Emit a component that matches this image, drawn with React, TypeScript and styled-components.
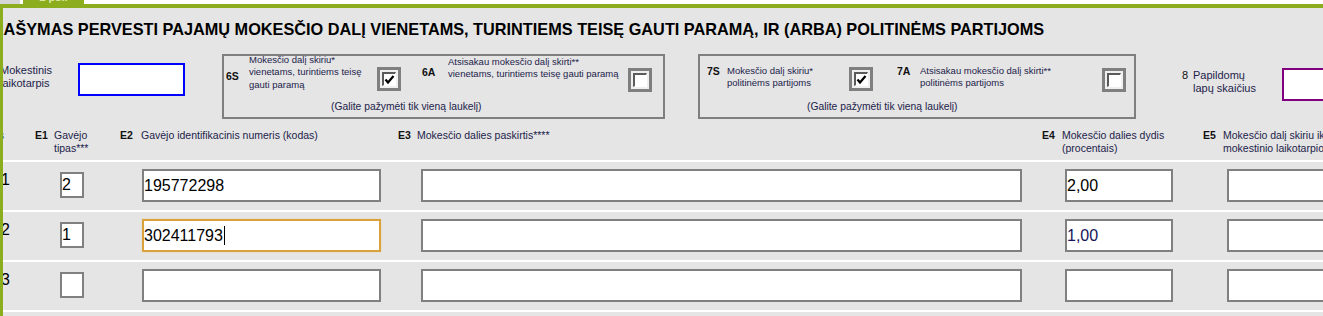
import React from "react";
import styled, { createGlobalStyle } from "styled-components";

const GREEN = "#8cae1e";
const LABEL = "#22224a";
const FIELD_BORDER = "#808080";
const FONT = `"Liberation Sans", Arial, sans-serif`;

const GlobalStyle = createGlobalStyle`
  html, body { margin: 0; padding: 0; background: #ffffff; }
  body { font-family: ${FONT}; overflow: hidden; }
`;

const Page = styled.div`
  width: 1323px;
  height: 316px;
  overflow: hidden;
  display: flex;
  flex-direction: column;
`;

const TabStrip = styled.div`
  height: 4px;
  display: flex;
  gap: 3px;
  flex-shrink: 0;
`;

const Tab = styled.div<{ $active?: boolean; $w: number }>`
  width: ${(p) => p.$w}px;
  background: ${(p) => (p.$active ? GREEN : "#d6d6d6")};
  color: #dbe8a4;
  font: bold 11px/11px ${FONT};
  text-align: center;
  overflow: hidden;
  span {
    display: block;
    margin-top: -8px;
  }
`;

const Frame = styled.div`
  flex: 1;
  border-top: 4px solid ${GREEN};
  border-left: 3px solid ${GREEN};
  background: #e5e5e5;
  overflow: hidden;
`;

const Inner = styled.div`
  margin-left: -30px;
  width: 1500px;
`;

const Title = styled.h1`
  box-sizing: border-box;
  height: 46px;
  margin: 0;
  padding: 11px 0 0 8px;
  font: bold 16.3px/21px ${FONT};
  color: #000;
  white-space: nowrap;
`;

const FieldsRow = styled.div`
  height: 65px;
  display: flex;
  align-items: flex-start;
`;

const SideLabel = styled.div<{ $w: number; $ml: number; $mt: number }>`
  width: ${(p) => p.$w}px;
  margin-left: ${(p) => p.$ml}px;
  margin-top: ${(p) => p.$mt}px;
  flex-shrink: 0;
  font-size: 11px;
  line-height: 13px;
  color: ${LABEL};
  white-space: nowrap;
  display: flex;
`;

const SideNum = styled.span`
  width: 11px;
  color: #111;
`;

const ColorInput = styled.div<{ $color: string; $w: number; $mt: number; $ml?: number }>`
  box-sizing: border-box;
  width: ${(p) => p.$w}px;
  height: 33px;
  margin-top: ${(p) => p.$mt}px;
  margin-left: ${(p) => p.$ml ?? 0}px;
  border: 2px solid ${(p) => p.$color};
  background: #fff;
  flex-shrink: 0;
`;

const Box = styled.div<{ $w: number; $ml: number }>`
  box-sizing: border-box;
  width: ${(p) => p.$w}px;
  height: 65px;
  margin-left: ${(p) => p.$ml}px;
  border: 2px solid #7f7f7f;
  display: flex;
  flex-direction: column;
  flex-shrink: 0;
`;

const BoxTop = styled.div<{ $pl: number }>`
  height: 45px;
  display: flex;
  align-items: flex-start;
  padding-left: ${(p) => p.$pl}px;
`;

const BoxCode = styled.div<{ $w: number; $mt: number; $ml?: number }>`
  width: ${(p) => p.$w}px;
  margin-top: ${(p) => p.$mt}px;
  margin-left: ${(p) => p.$ml ?? 0}px;
  flex-shrink: 0;
  font: bold 10.5px/12px ${FONT};
  color: #111;
`;

const BoxText = styled.div<{ $w: number; $mt: number }>`
  width: ${(p) => p.$w}px;
  margin-top: ${(p) => p.$mt}px;
  flex-shrink: 0;
  font-size: 9.5px;
  line-height: 12.3px;
  color: ${LABEL};
  white-space: nowrap;
`;

const BoxFooter = styled.div`
  padding-left: 107px;
  font-size: 10.3px;
  line-height: 12px;
  color: ${LABEL};
  white-space: nowrap;
`;

const CheckOuter = styled.div<{ $mt: number }>`
  box-sizing: border-box;
  width: 24px;
  height: 24px;
  margin-top: ${(p) => p.$mt}px;
  flex-shrink: 0;
  border: 3px solid #7f7f7f;
  background: #efefef;
  padding: 2px;
`;

const CheckInner = styled.div`
  box-sizing: border-box;
  width: 14px;
  height: 14px;
  border-top: 2px solid #5a5a5a;
  border-left: 2px solid #5a5a5a;
  border-right: 1px solid #ffffff;
  border-bottom: 1px solid #ffffff;
  background: #fff;
  display: flex;
  align-items: center;
  justify-content: center;
`;

const Checkbox: React.FC<{ checked?: boolean; mt: number }> = ({ checked, mt }) => (
  <CheckOuter $mt={mt}>
    <CheckInner>
      {checked && (
        <svg width="11" height="11" viewBox="0 0 11 11">
          <polyline points="1.5,5.5 4,8.5 9.5,2" fill="none" stroke="#000" strokeWidth="2.2" />
        </svg>
      )}
    </CheckInner>
  </CheckOuter>
);

const TABLE_COLS = "57px 85px 278px 644px 161px 175px";

const HeaderRow = styled.div`
  height: 41px;
  display: grid;
  grid-template-columns: ${TABLE_COLS};
`;

const HeaderCell = styled.div<{ $align?: "right" }>`
  display: flex;
  justify-content: ${(p) => (p.$align === "right" ? "flex-end" : "flex-start")};
  padding: 10px ${(p) => (p.$align === "right" ? "26px" : "0")} 0 5px;
`;

const HeadCode = styled.div<{ $w: number }>`
  width: ${(p) => p.$w}px;
  flex-shrink: 0;
  font: bold 10.5px/13px ${FONT};
  color: #111;
`;

const HeadText = styled.div`
  font-size: 10.5px;
  line-height: 13px;
  color: ${LABEL};
  white-space: nowrap;
`;

const DataRow = styled.div`
  height: 48px;
  border-top: 2px solid #ffffff;
  display: grid;
  grid-template-columns: ${TABLE_COLS};
  align-items: start;
`;

const RowNum = styled.div`
  padding: 10px 0 0 28px;
  font-size: 16px;
  line-height: 16px;
  color: #000;
`;

const Cell = styled.div<{ $pl: number }>`
  padding-left: ${(p) => p.$pl}px;
`;

const Field = styled.div<{ $w: number; $h: number; $mt: number; $focus?: boolean; $ink?: string }>`
  box-sizing: border-box;
  width: ${(p) => p.$w}px;
  height: ${(p) => p.$h}px;
  margin-top: ${(p) => p.$mt}px;
  border: 2px solid ${(p) => (p.$focus ? "#d9a23c" : FIELD_BORDER)};
  box-shadow: ${(p) => (p.$focus ? "0 0 1px 0 #f2cd8a" : "none")};
  background: #fff;
  display: flex;
  align-items: center;
  padding-left: 0;
  font-size: 16px;
  line-height: 18px;
  color: ${(p) => p.$ink ?? "#000"};
  white-space: nowrap;
  overflow: hidden;
`;

const Caret = styled.span`
  display: inline-block;
  width: 1px;
  height: 19px;
  background: #000;
  margin-left: 1px;
`;

type Row = { n: string; e1: string; e2: string; e4: string; focus?: boolean; ink?: string };

const rows: Row[] = [
  { n: "1", e1: "2", e2: "195772298", e4: "2,00" },
  { n: "2", e1: "1", e2: "302411793", e4: "1,00", focus: true, ink: "#14145a" },
  { n: "3", e1: "", e2: "", e4: "" },
  { n: "4", e1: "", e2: "", e4: "" },
];

export default function App() {
  return (
    <Page>
      <GlobalStyle />
      <TabStrip>
        <Tab $w={20} />
        <Tab $w={61} $active>
          <span>2 psl.</span>
        </Tab>
      </TabStrip>
      <Frame>
        <Inner>
          <Title>
            PRAŠYMAS PERVESTI PAJAMŲ MOKESČIO DALĮ VIENETAMS, TURINTIEMS TEISĘ GAUTI PARAMĄ, IR (ARBA) POLITINĖMS PARTIJOMS
          </Title>

          <FieldsRow>
            <SideLabel $w={78} $ml={27} $mt={10}>
              <div>
                Mokestinis
                <br />
                laikotarpis
              </div>
            </SideLabel>
            <ColorInput $color="#0000ff" $w={107} $mt={9} />

            <Box $w={443} $ml={37}>
              <BoxTop $pl={2}>
                <BoxCode $w={23} $mt={14}>6S</BoxCode>
                <BoxText $w={128} $mt={-2}>
                  Mokesčio dalį skiriu*
                  <br />
                  vienetams, turintiems teisę
                  <br />
                  gauti paramą
                </BoxText>
                <Checkbox checked mt={11} />
                <BoxCode $w={26} $mt={10} $ml={21}>6A</BoxCode>
                <BoxText $w={180} $mt={0}>
                  Atsisakau mokesčio dalį skirti**
                  <br />
                  vienetams, turintiems teisę gauti paramą
                </BoxText>
                <Checkbox mt={12} />
              </BoxTop>
              <BoxFooter>(Galite pažymėti tik vieną laukelį)</BoxFooter>
            </Box>

            <Box $w={438} $ml={33}>
              <BoxTop $pl={7}>
                <BoxCode $w={20} $mt={9}>7S</BoxCode>
                <BoxText $w={122} $mt={9}>
                  Mokesčio dalį skiriu*
                  <br />
                  politinėms partijoms
                </BoxText>
                <Checkbox checked mt={11} />
                <BoxCode $w={23} $mt={9} $ml={24}>7A</BoxCode>
                <BoxText $w={182} $mt={9}>
                  Atsisakau mokesčio dalį skirti**
                  <br />
                  politinėms partijoms
                </BoxText>
                <Checkbox mt={12} />
              </BoxTop>
              <BoxFooter>(Galite pažymėti tik vieną laukelį)</BoxFooter>
            </Box>

            <SideLabel $w={100} $ml={46} $mt={15}>
              <SideNum>8</SideNum>
              <div>
                Papildomų
                <br />
                lapų skaičius
              </div>
            </SideLabel>
            <ColorInput $color="#800080" $w={110} $mt={14} />
          </FieldsRow>

          <HeaderRow>
            <HeaderCell $align="right">
              <HeadText>Eilės</HeadText>
            </HeaderCell>
            <HeaderCell>
              <HeadCode $w={19}>E1</HeadCode>
              <HeadText>
                Gavėjo
                <br />
                tipas***
              </HeadText>
            </HeaderCell>
            <HeaderCell>
              <HeadCode $w={21}>E2</HeadCode>
              <HeadText>Gavėjo identifikacinis numeris (kodas)</HeadText>
            </HeaderCell>
            <HeaderCell>
              <HeadCode $w={19}>E3</HeadCode>
              <HeadText>Mokesčio dalies paskirtis****</HeadText>
            </HeaderCell>
            <HeaderCell>
              <HeadCode $w={20}>E4</HeadCode>
              <HeadText>
                Mokesčio dalies dydis
                <br />
                (procentais)
              </HeadText>
            </HeaderCell>
            <HeaderCell>
              <HeadCode $w={20}>E5</HeadCode>
              <HeadText>
                Mokesčio dalį skiriu iki
                <br />
                mokestinio laikotarpio
              </HeadText>
            </HeaderCell>
          </HeaderRow>

          {rows.map((r) => (
            <DataRow key={r.n}>
              <RowNum>{r.n}</RowNum>
              <Cell $pl={30}>
                <Field $w={24} $h={26} $mt={10}>{r.e1}</Field>
              </Cell>
              <Cell $pl={27}>
                <Field $w={239} $h={33} $mt={7} $focus={r.focus}>
                  {r.e2}
                  {r.focus && <Caret />}
                </Field>
              </Cell>
              <Cell $pl={28}>
                <Field $w={601} $h={33} $mt={7} />
              </Cell>
              <Cell $pl={28}>
                <Field $w={108} $h={33} $mt={7} $ink={r.ink}>{r.e4}</Field>
              </Cell>
              <Cell $pl={29}>
                <Field $w={140} $h={33} $mt={7} />
              </Cell>
            </DataRow>
          ))}
        </Inner>
      </Frame>
    </Page>
  );
}
